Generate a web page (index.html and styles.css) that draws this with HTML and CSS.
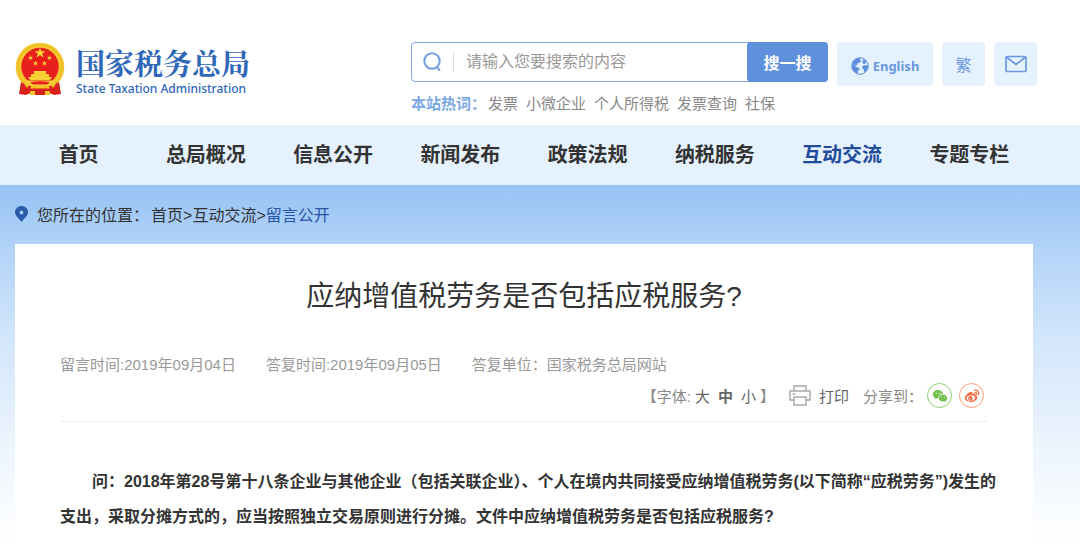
FILE: index.html
```html
<!DOCTYPE html>
<html lang="zh-CN">
    <head>
        <meta charset="utf-8">
        <meta name="viewport" content="width=device-width, initial-scale=1">
        <title>应纳增值税劳务是否包括应税服务?</title>
        <link rel="stylesheet" href="styles.css">
    </head>
    <body>
        <header class="header">
            <a class="logo" href="#">
                <svg class="emblem" viewBox="0 0 50 54" aria-hidden="true">
                    <circle cx="25" cy="25" r="24.300" fill="#f3c62b"/>
                    <circle cx="25" cy="25" r="22" fill="none" stroke="#e6ae20" stroke-dasharray="2 2"/>
                    <circle cx="25" cy="24.500" r="18.700" fill="#e71f1d"/>
                    <path fill="#f8d033" d="M25 5.500l1.400 3.700h4l-3.100 2.500 1.200 3.900-3.500-2.300-3.500 2.300 1.200-3.900-3.100-2.500h4z"/>
                    <g fill="#f8d033">
                        <path id="star" d="M15.500 13.300l.7 1.700h1.900l-1.500 1.200.6 1.900-1.700-1.100-1.700 1.100.6-1.900-1.500-1.200h1.900z"/>
                        <use href="#star" x="19"/>
                        <use href="#star" x="5" y="5.500"/>
                        <use href="#star" x="14" y="5.500"/>
                    </g>
                    <path fill="#f8d033" d="M19 29h12v3h3v3h3l-2 3H15l-2-3h3v-3h3z"/>
                    <path fill="#f8d033" d="M10 38.500h30l-3 4.500H13z"/>
                    <path fill="#e71f1d" d="M15 40.500q10-2.500 20 0l-3 2H18z"/>
                    <path fill="#d8201c" d="M6 40l9 4h20l9-4 2 12-7 1-3-1.500-3 1.500H17l-3-1.500-3 1.500-7-1z"/>
                    <path fill="#f3c62b" d="M17 43h16l2 3.500H15zM7 39l7 4-2 3zM43 39l-7 4 2 3zM15 49h5v4h-5zM30 49h5v4h-5z"/>
                </svg>
                <span class="logo-text">
                    <span class="logo-cn">国家税务总局</span>
                    <span class="logo-en">State Taxation Administration</span>
                </span>
            </a>
            <div class="search">
                <form class="search-form">
                    <label class="search-label" for="keyword" aria-label="搜索">
                        <svg width="20" height="20" viewBox="0 0 20 20" fill="none" stroke="#6f9fe0" stroke-width="2">
                            <circle cx="9" cy="9" r="7.700"/>
                            <path d="M13.500 15l3.500 3.500"/>
                        </svg>
                    </label>
                    <input class="search-input" id="keyword" type="text" placeholder="请输入您要搜索的内容">
                    <button class="search-btn" type="submit">搜一搜</button>
                </form>
                <div class="hot">
                    <strong>本站热词：</strong>
                    <a href="#">发票</a>
                    <a href="#">小微企业</a>
                    <a href="#">个人所得税</a>
                    <a href="#">发票查询</a>
                    <a href="#">社保</a>
                </div>
            </div>
            <div class="links">
                <a class="link link-en" href="#">
                    <svg width="18" height="18" viewBox="0 0 18 18">
                        <circle cx="9" cy="9" r="8.300" fill="#e6f1fe" stroke="#5f90de"/>
                        <path fill="#5f90de" d="M2 4.500Q5 .5 9.500 1l-.5 2 1.500 1-2.500 2-2 .5.500 2L4 8l1 2 2.500.5L9 12l-2 2v2.500Q2 15 1 10.500zM12 2l3.500 2.500-1 2-2 .5-1-2zM12 8.500l3-.5 2 1q0 4-3.500 6.500l-1-3-1.500-2z"/>
                    </svg>
                    English
                </a>
                <a class="link" href="#">繁</a>
                <a class="link" href="#" aria-label="邮箱">
                    <svg width="22" height="18" viewBox="0 0 22 18" fill="none" stroke="#6b98df" stroke-width="1.700">
                        <rect x="1" y="1.500" width="20" height="15" rx="1"/>
                        <path d="M2 2.500l9 7 9-7"/>
                    </svg>
                </a>
            </div>
        </header>

        <nav class="nav">
            <ul>
                <li><a href="#">首页</a></li>
                <li><a href="#">总局概况</a></li>
                <li><a href="#">信息公开</a></li>
                <li><a href="#">新闻发布</a></li>
                <li><a href="#">政策法规</a></li>
                <li><a href="#">纳税服务</a></li>
                <li><a class="active" href="#">互动交流</a></li>
                <li><a href="#">专题专栏</a></li>
            </ul>
        </nav>

        <main class="main">
            <div class="crumbs">
                <svg width="13" height="16" viewBox="0 0 13 16">
                    <path fill="#2b5cab" fill-rule="evenodd" d="M6.500 0A6.300 6.300 0 0 1 13 6.300C13 10 8.500 13 6.500 16 4.500 13 0 10 0 6.300A6.300 6.300 0 0 1 6.500 0zm0 4.500a2 2 0 1 0 0 4 2 2 0 0 0 0-4z"/>
                </svg>
                <span class="crumbs-label">您所在的位置：</span>
                <span><a href="#">首页</a>&gt;<a href="#">互动交流</a>&gt;<a class="current" href="#">留言公开</a></span>
            </div>

            <article class="article">
                <h1>应纳增值税劳务是否包括应税服务?</h1>
                <div class="meta">
                    <span>留言时间:2019年09月04日</span>
                    <span>答复时间:2019年09月05日</span>
                    <span>答复单位：国家税务总局网站</span>
                </div>
                <div class="tools">
                    <div class="sizes">
                        <span>【字体:</span>
                        <div class="sizes-list">
                            <button type="button">大</button>
                            <button type="button" class="on">中</button>
                            <button type="button">小</button>
                        </div>
                        <span>】</span>
                    </div>
                    <button type="button" class="print">
                        <svg width="22" height="21" viewBox="0 0 22 21" fill="none" stroke="#aaa" stroke-width="1.500">
                            <path d="M5 6V1h12v5M5 15H1V6h20v9h-4M5 12h12v8H5zM3.500 9h3"/>
                        </svg>
                        打印
                    </button>
                    <div class="share">
                        <span>分享到：</span>
                        <div class="share-icons">
                            <a class="wechat" href="#" aria-label="微信">
                                <svg width="16" height="16" viewBox="0 0 16 16">
                                    <path fill="#72c14b" d="M6 2C2.800 2 .8 4 .8 6.300c0 1.400.8 2.600 2 3.300l-.5 1.700 2-1c.6.2 1.200.2 1.800.2C6 7.500 8.200 5.700 11 5.800 10.500 3.500 8.500 2 6 2z"/>
                                    <path fill="#72c14b" d="M11 6.500c-2.500 0-4.300 1.600-4.300 3.500s1.800 3.500 4.300 3.500l1.400-.2 1.600.9-.4-1.500c1-.6 1.700-1.600 1.700-2.700 0-1.900-1.900-3.500-4.300-3.500z"/>
                                    <g fill="#fff">
                                        <circle cx="4.300" cy="5.200" r=".6"/>
                                        <circle cx="7.700" cy="5.200" r=".6"/>
                                        <circle cx="9.600" cy="9" r=".5"/>
                                        <circle cx="12.400" cy="9" r=".5"/>
                                    </g>
                                </svg>
                            </a>
                            <a class="weibo" href="#" aria-label="微博">
                                <svg width="16" height="16" viewBox="0 0 16 16">
                                    <path fill="#f8673c" d="M6.500 4C8 3.500 8.700 4.200 8.300 5.800c2-.8 3.700-.4 3.200 1.400C13 7.700 13.500 8.500 13.300 9.800 12.800 12.400 9.800 14 6.700 14 3.500 14 .8 12.500.8 10.100.8 7.800 4 4.600 6.500 4z"/>
                                    <ellipse cx="6.800" cy="10" rx="4.300" ry="2.700" fill="#fff" transform="rotate(-8 6.800 10)"/>
                                    <circle cx="6.300" cy="10.200" r="2.200" fill="#f8673c"/>
                                    <circle cx="5.700" cy="10.700" r=".7" fill="#fff"/>
                                    <path fill="none" stroke="#f8673c" stroke-width="1.200" stroke-linecap="round" d="M10.500 2.300c2.800-.6 4.900 1.700 4.100 4.500M10.900 4.500c1.200-.2 2 .7 1.700 1.800"/>
                                </svg>
                            </a>
                        </div>
                    </div>
                </div>
                <p class="content">问：2018年第28号第十八条企业与其他企业（包括关联企业）、个人在境内共同接受应纳增值税劳务(以下简称“应税劳务”)发生的支出，采取分摊方式的，应当按照独立交易原则进行分摊。文件中应纳增值税劳务是否包括应税服务?</p>
            </article>
        </main>
    </body>
</html>
```

FILE: styles.css
```css
* {
    box-sizing: border-box;
}
body {
    display: flex;
    flex-direction: column;
    min-height: 100vh;
    margin: 0;
    background-color: #fff;
    color: #333;
    font-family: "Liberation Sans", "Noto Sans CJK SC", sans-serif;
    font-size: 16px;
}
a {
    color: inherit;
    text-decoration: none;
}
button {
    padding: 0;
    border: 0;
    background: none;
    color: inherit;
    font: inherit;
    cursor: pointer;
}
svg {
    display: block;
    flex: none;
}

/* header */
.header {
    display: flex;
    align-items: flex-start;
    height: 125px;
    padding: 42px 43px 0 15px;
}
.logo {
    display: flex;
    gap: 11px;
    margin-right: auto;
    color: #2f68b8;
}
.emblem {
    width: 50px;
    height: 54px;
}
.logo-text {
    display: flex;
    flex-direction: column;
    padding-top: 3px;
    white-space: nowrap;
}
.logo-cn {
    font-family: "Noto Serif CJK SC", "Noto Sans CJK SC", serif;
    font-size: 29px;
    font-weight: bold;
    line-height: 36px;
}
.logo-en {
    font-family: "Noto Sans", sans-serif;
    font-size: 12px;
    font-weight: 500;
    line-height: 16px;
}
.search {
    width: 417px;
    margin-right: 9px;
}
.search-form {
    display: flex;
    height: 40px;
    border: 1px solid #7fa6e2;
    border-radius: 4px;
}
.search-label {
    align-self: center;
    padding: 0 10px 0 11px;
    border-right: 1px solid #ddd;
}
.search-input {
    flex: 1;
    min-width: 0;
    padding: 0 12px;
    border: 0;
    outline: 0;
    background: none;
    font: inherit;
}
.search-input::placeholder {
    color: #999;
}
.search-btn {
    width: 81px;
    margin: -1px;
    border-radius: 4px;
    background-color: #5f90de;
    color: #fff;
    font-weight: bold;
}
.hot {
    display: flex;
    gap: 8px;
    margin-top: 11px;
    color: #888;
    font-size: 15px;
    line-height: 22px;
    white-space: nowrap;
}
.hot strong {
    margin-right: -6px;
    color: #79a8e4;
}
.links {
    display: flex;
    gap: 9px;
}
.link {
    display: flex;
    align-items: center;
    justify-content: center;
    width: 43px;
    height: 44px;
    border-radius: 4px;
    background-color: #e6f1fe;
    color: #6b98df;
}
.link-en {
    gap: 4px;
    width: 96px;
    padding-top: 4px;
    font-family: "Noto Sans", sans-serif;
    font-size: 13px;
    font-weight: bold;
}

/* nav */
.nav {
    padding: 0 47px 0 15px;
    background-color: #e6f1fe;
}
.nav ul {
    display: flex;
    margin: 0;
    padding: 0;
    list-style: none;
}
.nav li {
    flex: 1;
    font-size: 20px;
    font-weight: bold;
    line-height: 60px;
    text-align: center;
    white-space: nowrap;
}
.nav .active {
    color: #214c9c;
}

/* main */
.main {
    display: flex;
    flex: 1;
    flex-direction: column;
    padding: 0 47px 0 15px;
    background: linear-gradient(#97c3f5, #b1d2f8 59px, #d3e6fb 155px, #ebf4fe 255px, #fff 359px);
}
.crumbs {
    display: flex;
    align-items: center;
    height: 59px;
    padding-bottom: 2px;
}
.crumbs-label {
    margin: 0 2px 0 9px;
}
.crumbs .current {
    color: #2a54a5;
}
.article {
    flex: 1;
    padding: 29px 30px 10px 45px;
    background-color: #fff;
}
.article h1 {
    margin: 0 15px 29px 0;
    font-size: 28px;
    font-weight: normal;
    line-height: 48px;
    text-align: center;
}
.meta {
    display: flex;
    gap: 30px;
    color: #999;
    font-size: 15px;
    line-height: 30px;
}
.tools {
    display: flex;
    align-items: center;
    justify-content: flex-end;
    gap: 14px;
    height: 42px;
    margin-right: 15px;
    padding: 0 4px 10px 0;
    border-bottom: 1px solid #eee;
    color: #888;
    font-size: 15px;
}
.sizes,
.share {
    display: flex;
    align-items: center;
    gap: 4px;
}
.sizes-list {
    display: flex;
    gap: 8px;
}
.sizes button,
.print {
    color: #666;
}
.sizes .on {
    font-weight: bold;
}
.print {
    display: flex;
    align-items: center;
    gap: 8px;
}
.share-icons {
    display: flex;
    gap: 7px;
}
.wechat,
.weibo {
    display: flex;
    align-items: center;
    justify-content: center;
    width: 25px;
    height: 25px;
    border: 1px solid #8fce6f;
    border-radius: 50%;
}
.weibo {
    border-color: #ff9b78;
}
.content {
    margin: 42px 0 0;
    font-weight: bold;
    line-height: 35px;
    text-indent: 2em;
}
```
